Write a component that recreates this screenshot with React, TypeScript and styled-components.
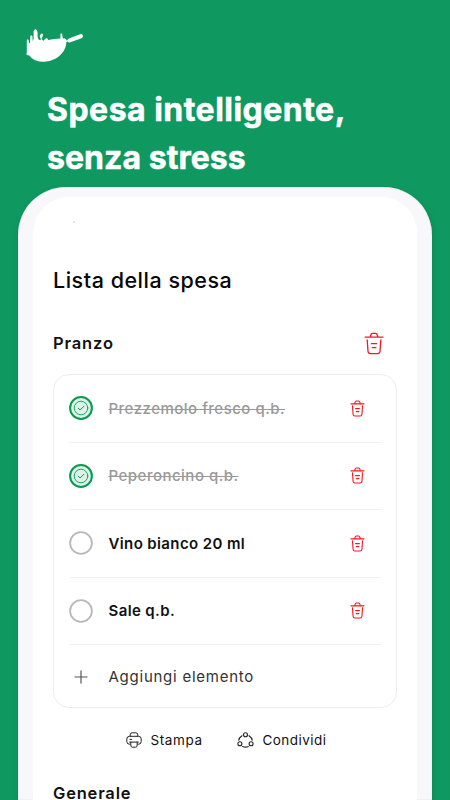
import React from "react";
import styled, { createGlobalStyle } from "styled-components";

const GlobalStyle = createGlobalStyle`
  * { box-sizing: border-box; }
  html, body { margin: 0; padding: 0; }
  body { background: #0f9960; font-family: Inter, "Liberation Sans", sans-serif; overflow: hidden; }
`;

const Page = styled.main`
  width: 450px;
  height: 800px;
  overflow: hidden;
  background: #0f9960;
  display: flex;
  flex-direction: column;
`;

const Hero = styled.header`
  height: 187px;
  flex: none;
  padding: 24px 0 0 22px;
`;

const Logo = styled.svg`
  display: block;
  width: 64px;
  height: 42px;
`;

const Headline = styled.h1`
  margin: 20px 0 0 25px;
  font-size: 32px;
  line-height: 48px;
  font-weight: 700;
  color: #fff;
  white-space: nowrap;
`;

const HeadlineLine = styled.span<{ $spacing: number }>`
  display: block;
  letter-spacing: ${(p) => p.$spacing}px;
  -webkit-text-stroke: 0.5px #fff;
`;

const Phone = styled.section`
  width: 414px;
  height: 613px;
  flex: none;
  margin-left: 18px;
  padding: 10px 15px 0;
  border-radius: 48px 48px 0 0;
  background: #f8f8fb;
  box-shadow: inset 0 0 2px #d9dde2, 1px 3px 7px rgba(0, 60, 30, 0.2);
`;

const Screen = styled.div`
  height: 100%;
  padding: 24px 20px 0;
  border-radius: 36px 36px 0 0;
  background: #fff;
`;

const StatusSpeck = styled.div`
  width: 2px;
  height: 2px;
  margin-left: 20px;
  background: #e4e4e4;
`;

const Title = styled.h2`
  margin: 42px 0 0;
  font-size: 21.5px;
  line-height: 30px;
  font-weight: 500;
  letter-spacing: 0.52px;
  color: #080808;
`;

const SectionHead = styled.div`
  display: flex;
  justify-content: space-between;
  align-items: center;
  height: 30px;
  margin-top: 33px;
  padding-right: 13px;
`;

const SectionName = styled.h3<{ $spacing: number }>`
  margin: 0;
  font-size: 16.5px;
  line-height: 24px;
  font-weight: 600;
  letter-spacing: ${(p) => p.$spacing}px;
  color: #111;
`;

const Card = styled.ul`
  list-style: none;
  margin: 16px 0 0;
  padding: 0 15px;
  height: 334px;
  border: 1px solid #ededee;
  border-radius: 16px;
`;

const Row = styled.li`
  display: flex;
  align-items: center;
  height: 67.5px;
  padding-right: 16px;
  border-bottom: 1px solid #f0f0f1;
`;

const ItemName = styled.span<{ $done?: boolean; $spacing: number }>`
  flex: 1;
  margin-left: 15.5px;
  padding-top: 1px;
  font-size: 15px;
  line-height: 22px;
  font-weight: ${(p) => (p.$done ? 500 : 600)};
  letter-spacing: ${(p) => p.$spacing}px;
  color: ${(p) => (p.$done ? "#999" : "#111")};

  > span {
    text-decoration: ${(p) => (p.$done ? "line-through" : "none")};
    text-decoration-thickness: 1px;
  }
`;

const AddRow = styled.li`
  display: flex;
  align-items: center;
  height: 62px;
  padding-top: 1px;
`;

const AddLabel = styled.span`
  margin-left: 15.5px;
  font-size: 15px;
  letter-spacing: 0.75px;
  color: #333;
`;

const Icon = styled.svg<{ $w: number; $h: number }>`
  display: block;
  flex: none;
  width: ${(p) => p.$w}px;
  height: ${(p) => p.$h}px;
`;

const Actions = styled.div`
  display: flex;
  align-items: center;
  height: 24px;
  margin-top: 20px;
  padding-left: 73px;
`;

const Action = styled.div<{ $width: number; $spacing: number }>`
  display: flex;
  align-items: center;
  gap: 8.5px;
  width: ${(p) => p.$width}px;
  font-size: 13.5px;
  font-weight: 400;
  letter-spacing: ${(p) => p.$spacing}px;
  color: #111;
  white-space: nowrap;
`;

const NextSection = styled.div`
  margin-top: 29px;
`;

const Trash = ({ large = false }: { large?: boolean }) => (
  <Icon $w={large ? 20 : 15} $h={large ? 23 : 17} viewBox="0 0 20 23" fill="none" stroke="#fa1520" strokeWidth={large ? 1.3 : 1.5} strokeLinecap="round" strokeLinejoin="round">
    <path d="M1.2 5.2H18.8M6.2 5l.6-2.2Q7.1 1.3 8.5 1.3h3q1.4 0 1.7 1.5l.6 2.2M3.2 8l.8 11.3Q4.2 21.7 6.5 21.7h7q2.3 0 2.5-2.4L16.8 8M7.4 11.6h5.2M8.4 15.7h3.4" />
  </Icon>
);

const Check = ({ done }: { done: boolean }) => (
  <Icon $w={24} $h={24} viewBox="0 0 24 24" fill="none" strokeLinecap="round" strokeLinejoin="round">
    <circle cx="12" cy="12" r="10.9" fill={done ? "#dcf3e8" : "#fff"} stroke={done ? "#0b9a50" : "#b9b9b9"} strokeWidth={done ? 2 : 1.8} />
    {done && (
      <g stroke="#109b58">
        <circle cx="12" cy="12" r="6.8" strokeWidth="0.9" />
        <path d="M9.2 12.2l1.9 1.8 3.8-3.8" strokeWidth="1" />
      </g>
    )}
  </Icon>
);

const PanLogo = () => (
  <Logo viewBox="22 24 64 42" fill="#fff" aria-label="logo">
    <path d="M26.8 53 L26.8 40.5 Q27.7 38.2 28.7 40.5 L29 43.2 L30.1 42.5 L30.3 36.2 Q31.3 34.4 32.4 36.2 L32.7 41 L33.6 39 L33.6 31.5 Q34.8 27.9 36.8 30 Q38 32 37.6 34.5 Q37.2 37.5 38.6 39.6 L40.3 40.2 L41 39 Q39.2 37.5 39.9 35 Q42 32.2 43 34.6 Q42.9 36.6 41.7 38.2 Q42 40.3 43.6 40.7 Q45.4 37.9 47.2 38.3 L48.2 40 Q54 38.6 60.4 38.4 L60.4 34.2 Q61.3 32.5 62.3 34.2 L62.7 38.2 Q65.2 38.2 66.4 39.6 Q66.8 48 61.8 53.6 Q55.4 61.2 44.4 61.8 Q33.6 62 29.4 55.4 L26.8 55 Q26 54 26.8 53Z" />
    <path d="M69.6 40.4 L80.8 36.2" fill="none" stroke="#fff" strokeWidth="4.2" strokeLinecap="round" />
    <path d="M66 41.4l3-1" stroke="#fff" strokeWidth="1.4" />
  </Logo>
);

const items = [
  { name: "Prezzemolo fresco q.b.", done: true, spacing: 0.49 },
  { name: "Peperoncino q.b.", done: true, spacing: 0.49 },
  { name: "Vino bianco 20 ml", done: false, spacing: 0.38 },
  { name: "Sale q.b.", done: false, spacing: 0.38 },
];

export default function App() {
  return (
    <>
      <GlobalStyle />
      <Page>
        <Hero>
          <PanLogo />
          <Headline>
            <HeadlineLine $spacing={0.48}>Spesa intelligente,</HeadlineLine>
            <HeadlineLine $spacing={0.05}>senza stress</HeadlineLine>
          </Headline>
        </Hero>
        <Phone>
          <Screen>
            <StatusSpeck />
            <Title>Lista della spesa</Title>
            <SectionHead>
              <SectionName $spacing={0.85}>Pranzo</SectionName>
              <Trash large />
            </SectionHead>
            <Card>
              {items.map((item) => (
                <Row key={item.name}>
                  <Check done={item.done} />
                  <ItemName $done={item.done} $spacing={item.spacing}>
                    <span>{item.name}</span>
                  </ItemName>
                  <Trash />
                </Row>
              ))}
              <AddRow>
                <Icon $w={24} $h={24} viewBox="0 0 24 24" fill="none" stroke="#555" strokeWidth="1.2">
                  <path d="M12 5.5v13M5.5 12h13" />
                </Icon>
                <AddLabel>Aggiungi elemento</AddLabel>
              </AddRow>
            </Card>
            <Actions>
              <Action $width={111} $spacing={0.6}>
                <Icon $w={16} $h={16} viewBox="0 0 16 16" fill="none" stroke="#222" strokeWidth="1" strokeLinejoin="round" strokeLinecap="round">
                  <path d="M4.2 4.2V2.8Q4.2.8 6.2.8h3.6q2 0 2 2v1.4M4.2 12.2H3.4Q.8 12.2.8 9.4V7Q.8 4.3 3.4 4.3h9.2q2.6 0 2.6 2.7v2.4q0 2.8-2.6 2.8h-.8M3.7 10.1h8.6M4.8 10.1v3Q4.8 15.2 6.5 15.2h3q1.7 0 1.7-2.1v-3M4 7.4h1.6" />
                </Icon>
                Stampa
              </Action>
              <Action $width={110} $spacing={0.45}>
                <Icon $w={17} $h={16} viewBox="0 0 17 16" fill="none" stroke="#222" strokeWidth="1.1" strokeLinecap="round">
                  <circle cx="8.5" cy="2.7" r="2" />
                  <circle cx="2.9" cy="11.8" r="2" />
                  <circle cx="14.1" cy="11.8" r="2" />
                  <path d="M5 3.7Q2 5.6 1.8 8.2M12 3.7q3 1.9 3.2 4.5M5.6 14.6q2.9 1.1 5.8 0" />
                </Icon>
                Condividi
              </Action>
            </Actions>
            <NextSection>
              <SectionName $spacing={0.8}>Generale</SectionName>
            </NextSection>
          </Screen>
        </Phone>
      </Page>
    </>
  );
}
